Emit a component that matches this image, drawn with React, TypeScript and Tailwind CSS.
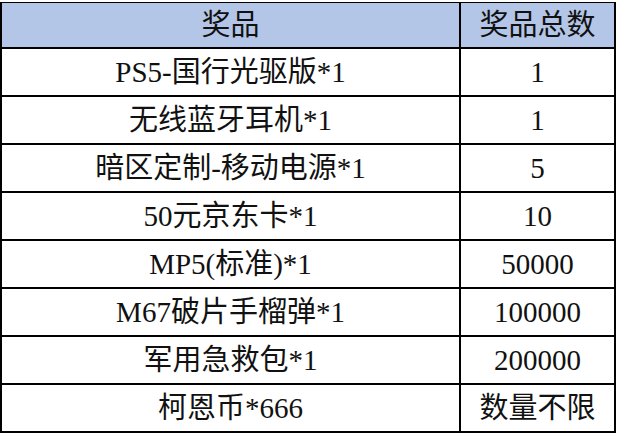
const rows: [string, string][] = [
  ["PS5-国行光驱版*1", "1"],
  ["无线蓝牙耳机*1", "1"],
  ["暗区定制-移动电源*1", "5"],
  ["50元京东卡*1", "10"],
  ["MP5(标准)*1", "50000"],
  ["M67破片手榴弹*1", "100000"],
  ["军用急救包*1", "200000"],
  ["柯恩币*666", "数量不限"],
];

export default function App() {
  return (
    <div
      className="w-[617px] h-[434px] bg-white pt-[2px] text-[#111]"
      style={{ fontFamily: '"Liberation Serif", "Noto Sans CJK SC", serif' }}
    >
      <div className="w-[616px] border-t border-l-2 border-r-2 border-black">
        {/* header */}
        <div className="flex h-[46px] border-b-2 border-black bg-[#b4c6e7] text-[29px] leading-none">
          <div className="w-[459px] border-r-2 border-black flex items-center justify-center">
            奖品
          </div>
          <div className="flex-1 flex items-center justify-center">奖品总数</div>
        </div>
        {rows.map(([name, count]) => (
          <div
            key={name}
            className="flex h-[48px] border-b-2 border-black text-[29px] leading-none"
          >
            <div className="w-[459px] border-r-2 border-black flex items-center justify-center">
              {name}
            </div>
            <div className="flex-1 flex items-center justify-center">{count}</div>
          </div>
        ))}
      </div>
    </div>
  );
}
